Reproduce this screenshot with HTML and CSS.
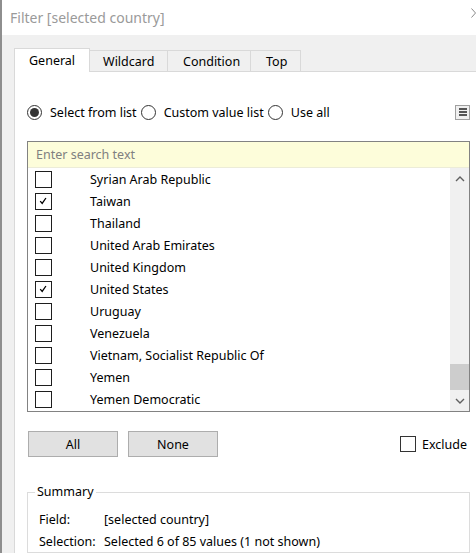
FILE: index.html
```html
<!DOCTYPE html>
<html>
<head>
<meta charset="utf-8">
<link rel="stylesheet" href="styles.css">
</head>
<body>
<div class="window">
  <div class="edge"></div>
  <div class="frame">
    <div class="titlebar">
      <span class="title">Filter [selected country]</span>
      <svg class="close" width="5" height="10" viewBox="0 0 5 10"><path d="M0.5 0.5 L4.5 5 L0.5 9.5" fill="none" stroke="#8a8a8a" stroke-width="1"/></svg>
    </div>
    <div class="content">
      <div class="tabs">
        <div class="tab tab-general active">General</div>
        <div class="tab tab-wildcard">Wildcard</div>
        <div class="tab tab-condition">Condition</div>
        <div class="tab tab-top">Top</div>
      </div>
      <div class="panel">
        <div class="radio-row">
          <span class="radio checked"></span><span class="radio-label">Select from list</span>
          <span class="radio"></span><span class="radio-label">Custom value list</span>
          <span class="radio"></span><span class="radio-label">Use all</span>
          <span class="menu-btn"><i></i><i></i><i></i></span>
        </div>
        <div class="listbox">
          <div class="search">Enter search text</div>
          <div class="list">
            <div class="rows">
              <div class="row"><span class="cb"></span><span class="name">Syrian Arab Republic</span></div>
              <div class="row"><span class="cb"><svg width="16" height="16" viewBox="0 0 16 16"><path d="M4.5 8.2 L6.6 10.6 L10.6 4.8" fill="none" stroke="#000" stroke-width="1.4"/></svg></span><span class="name">Taiwan</span></div>
              <div class="row"><span class="cb"></span><span class="name">Thailand</span></div>
              <div class="row"><span class="cb"></span><span class="name">United Arab Emirates</span></div>
              <div class="row"><span class="cb"></span><span class="name">United Kingdom</span></div>
              <div class="row"><span class="cb"><svg width="16" height="16" viewBox="0 0 16 16"><path d="M4.5 8.2 L6.6 10.6 L10.6 4.8" fill="none" stroke="#000" stroke-width="1.4"/></svg></span><span class="name">United States</span></div>
              <div class="row"><span class="cb"></span><span class="name">Uruguay</span></div>
              <div class="row"><span class="cb"></span><span class="name">Venezuela</span></div>
              <div class="row"><span class="cb"></span><span class="name">Vietnam, Socialist Republic Of</span></div>
              <div class="row"><span class="cb"></span><span class="name">Yemen</span></div>
              <div class="row"><span class="cb"></span><span class="name">Yemen Democratic</span></div>
            </div>
            <div class="scrollbar">
              <div class="sb-btn sb-up"><svg width="10" height="6" viewBox="0 0 10 6"><path d="M1 5 L5 1 L9 5" fill="none" stroke="#606060" stroke-width="1.4"/></svg></div>
              <div class="sb-track"></div>
              <div class="sb-thumb"></div>
              <div class="sb-btn sb-down"><svg width="10" height="6" viewBox="0 0 10 6"><path d="M1 1 L5 5 L9 1" fill="none" stroke="#606060" stroke-width="1.4"/></svg></div>
            </div>
          </div>
        </div>
        <div class="button-row">
          <button class="btn">All</button>
          <button class="btn">None</button>
          <span class="exclude"><span class="cb cb-small"></span><span>Exclude</span></span>
        </div>
        <fieldset class="summary">
          <legend>Summary</legend>
          <div class="sum-row"><span class="sum-label">Field:</span><span>[selected country]</span></div>
          <div class="sum-row"><span class="sum-label">Selection:</span><span>Selected 6 of 85 values (1 not shown)</span></div>
        </fieldset>
      </div>
    </div>
  </div>
</div>
</body>
</html>
```
FILE: styles.css
```css
* { box-sizing: border-box; }
html, body { margin: 0; padding: 0; }
body {
  width: 476px;
  height: 553px;
  overflow: hidden;
  font-family: "Noto Sans", "Open Sans", sans-serif;
  font-size: 12.5px;
  color: #000;
  background: #f0f0f0;
}
.window { display: flex; height: 553px; }
.edge { width: 2px; flex: none; background: #8e8e8e; }
.frame { flex: 1; display: flex; flex-direction: column; min-width: 0; }
.titlebar {
  height: 35px;
  flex: none;
  background: #fff;
  display: flex;
  align-items: center;
  padding-left: 8px;
}
.title { font-size: 14px; color: #9a9a9a; }
.close { margin-left: auto; margin-top: -10px; }
.content {
  flex: 1;
  display: flex;
  flex-direction: column;
  padding: 13px 0 0 12px;
  min-height: 0;
}
.tabs {
  display: flex;
  align-items: flex-end;
  height: 24px;
  flex: none;
  margin-bottom: -1px;
  position: relative;
  z-index: 1;
}
.tab {
  height: 21px;
  margin-bottom: 1px;
  border: 1px solid #d9d9d9;
  border-bottom: none;
  background: #f0f0f0;
  display: flex;
  align-items: center;
  padding-left: 13px;
  margin-left: -1px;
}
.tab.active {
  height: 24px;
  margin-bottom: 0;
  margin-left: 0;
  background: #fff;
  padding-left: 14px;
  padding-bottom: 1px;
}
.tab-general { width: 76px; }
.tab-wildcard { width: 79px; }
.tab-condition { width: 84px; padding-left: 15px; }
.tab-top { width: 51px; padding-left: 15px; }
.panel {
  flex: 1;
  background: #fff;
  border-top: 1px solid #d9d9d9;
  border-left: 1px solid #d9d9d9;
  padding: 0 6px 0 12px;
  display: flex;
  flex-direction: column;
}
.radio-row {
  margin-top: 32px;
  height: 16px;
  display: flex;
  align-items: center;
}
.radio {
  width: 15px;
  height: 15px;
  border: 1px solid #333;
  border-radius: 50%;
  flex: none;
  display: flex;
  align-items: center;
  justify-content: center;
}
.radio.checked::after {
  content: "";
  width: 9px;
  height: 9px;
  border-radius: 50%;
  background: #333;
}
.radio-label { margin-left: 8px; margin-right: 4px; }
.menu-btn {
  margin-left: auto;
  width: 15px;
  height: 15px;
  border: 1px solid #a0a0a0;
  background: #f0f0f0;
  display: flex;
  flex-direction: column;
  align-items: center;
  justify-content: center;
  gap: 1px;
}
.menu-btn i { display: block; width: 8px; height: 2px; background: #555; }
.listbox {
  margin-top: 21px;
  border: 1px solid #828282;
  display: flex;
  flex-direction: column;
}
.search {
  height: 26px;
  background: #fdfdda;
  border-bottom: 1px solid #ececd8;
  color: #808080;
  padding-left: 8px;
  display: flex;
  align-items: center;
}
.list { display: flex; height: 243px; }
.rows { flex: 1; display: flex; flex-direction: column; }
.row { height: 22px; display: flex; align-items: center; }
.cb {
  width: 17px;
  height: 17px;
  border: 1px solid #1e1e1e;
  background: #fff;
  margin-left: 7px;
  flex: none;
  display: flex;
  align-items: center;
  justify-content: center;
}
.cb svg { display: block; }
.name { margin-left: 38px; }
.scrollbar {
  width: 19px;
  background: #f0f0f0;
  display: flex;
  flex-direction: column;
}
.sb-btn { display: flex; align-items: center; justify-content: center; }
.sb-up { height: 22px; }
.sb-track { flex: 1; }
.sb-thumb { height: 26px; background: #cdcdcd; }
.sb-down { height: 21px; }
.button-row {
  margin-top: 19px;
  display: flex;
  align-items: center;
  height: 26px;
  padding-left: 1px;
}
.btn {
  width: 90px;
  height: 26px;
  margin-right: 10px;
  background: #e1e1e1;
  border: 1px solid #adadad;
  font-family: inherit;
  font-size: 12.5px;
  color: #000;
  padding: 0;
}
.exclude { margin-left: auto; display: flex; align-items: center; padding-right: 3px; }
.cb-small { width: 16px; height: 16px; margin-left: 0; margin-right: 6px; border-color: #333; }
.summary {
  margin: 27px 0 0 0;
  border: 1px solid #dcdcdc;
  padding: 8px 6px 0 11px;
  min-width: 0;
  flex: 1;
}
.summary legend { padding: 0 2px; margin-left: -4px; line-height: 16px; }
.sum-row { height: 22px; display: flex; align-items: center; }
.sum-label { width: 65px; flex: none; }
```
